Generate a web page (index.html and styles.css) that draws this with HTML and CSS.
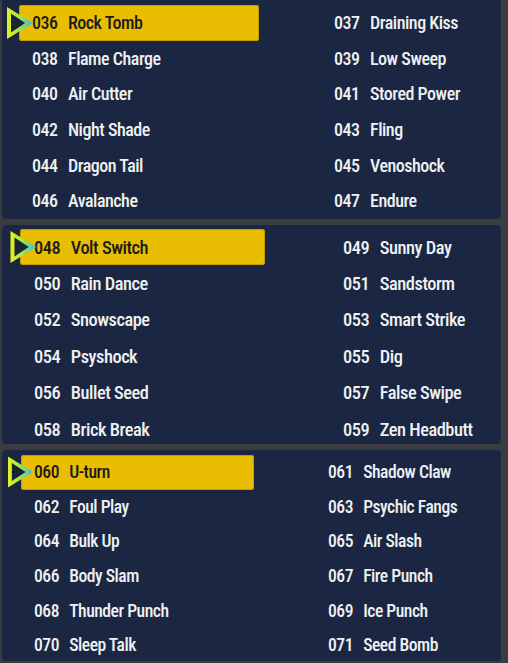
FILE: index.html
```html
<!DOCTYPE html>
<html lang="en">
<head>
<meta charset="utf-8">
<title>TM List</title>
<link rel="stylesheet" href="styles.css">
</head>
<body>
<main class="list">
  <section class="panel panel-a">
    <div class="item sel"><svg class="cursor" viewBox="0 0 26 32" width="26" height="32"><defs><linearGradient id="ga" x1="0" y1="0" x2="1" y2="0"><stop offset="0" stop-color="#e4f21c"/><stop offset="0.45" stop-color="#a6e44a"/><stop offset="1" stop-color="#2cc0f0"/></linearGradient></defs><polygon points="0,0 26,16 0,32" fill="url(#ga)"/><polygon points="4,6.6 18.2,16 4,25.4" fill="#1a2434"/></svg><span class="num">036</span><span class="name">Rock Tomb</span></div>
    <div class="item"><span class="num">037</span><span class="name">Draining Kiss</span></div>
    <div class="item"><span class="num">038</span><span class="name">Flame Charge</span></div>
    <div class="item"><span class="num">039</span><span class="name">Low Sweep</span></div>
    <div class="item"><span class="num">040</span><span class="name">Air Cutter</span></div>
    <div class="item"><span class="num">041</span><span class="name">Stored Power</span></div>
    <div class="item"><span class="num">042</span><span class="name">Night Shade</span></div>
    <div class="item"><span class="num">043</span><span class="name">Fling</span></div>
    <div class="item"><span class="num">044</span><span class="name">Dragon Tail</span></div>
    <div class="item"><span class="num">045</span><span class="name">Venoshock</span></div>
    <div class="item"><span class="num">046</span><span class="name">Avalanche</span></div>
    <div class="item"><span class="num">047</span><span class="name">Endure</span></div>
  </section>
  <section class="panel panel-b">
    <div class="item sel"><svg class="cursor" viewBox="0 0 26 32" width="27" height="32"><defs><linearGradient id="gb" x1="0" y1="0" x2="1" y2="0"><stop offset="0" stop-color="#e4f21c"/><stop offset="0.45" stop-color="#a6e44a"/><stop offset="1" stop-color="#2cc0f0"/></linearGradient></defs><polygon points="0,0 26,16 0,32" fill="url(#gb)"/><polygon points="4,6.6 18.2,16 4,25.4" fill="#1a2434"/></svg><span class="num">048</span><span class="name">Volt Switch</span></div>
    <div class="item"><span class="num">049</span><span class="name">Sunny Day</span></div>
    <div class="item"><span class="num">050</span><span class="name">Rain Dance</span></div>
    <div class="item"><span class="num">051</span><span class="name">Sandstorm</span></div>
    <div class="item"><span class="num">052</span><span class="name">Snowscape</span></div>
    <div class="item"><span class="num">053</span><span class="name">Smart Strike</span></div>
    <div class="item"><span class="num">054</span><span class="name">Psyshock</span></div>
    <div class="item"><span class="num">055</span><span class="name">Dig</span></div>
    <div class="item"><span class="num">056</span><span class="name">Bullet Seed</span></div>
    <div class="item"><span class="num">057</span><span class="name">False Swipe</span></div>
    <div class="item"><span class="num">058</span><span class="name">Brick Break</span></div>
    <div class="item"><span class="num">059</span><span class="name">Zen Headbutt</span></div>
  </section>
  <section class="panel panel-c">
    <div class="item sel"><svg class="cursor" viewBox="0 0 26 32" width="25" height="31"><defs><linearGradient id="gc" x1="0" y1="0" x2="1" y2="0"><stop offset="0" stop-color="#e4f21c"/><stop offset="0.45" stop-color="#a6e44a"/><stop offset="1" stop-color="#2cc0f0"/></linearGradient></defs><polygon points="0,0 26,16 0,32" fill="url(#gc)"/><polygon points="4,6.6 18.2,16 4,25.4" fill="#1a2434"/></svg><span class="num">060</span><span class="name">U-turn</span></div>
    <div class="item"><span class="num">061</span><span class="name">Shadow Claw</span></div>
    <div class="item"><span class="num">062</span><span class="name">Foul Play</span></div>
    <div class="item"><span class="num">063</span><span class="name">Psychic Fangs</span></div>
    <div class="item"><span class="num">064</span><span class="name">Bulk Up</span></div>
    <div class="item"><span class="num">065</span><span class="name">Air Slash</span></div>
    <div class="item"><span class="num">066</span><span class="name">Body Slam</span></div>
    <div class="item"><span class="num">067</span><span class="name">Fire Punch</span></div>
    <div class="item"><span class="num">068</span><span class="name">Thunder Punch</span></div>
    <div class="item"><span class="num">069</span><span class="name">Ice Punch</span></div>
    <div class="item"><span class="num">070</span><span class="name">Sleep Talk</span></div>
    <div class="item"><span class="num">071</span><span class="name">Seed Bomb</span></div>
  </section>
</main>
</body>
</html>
```
FILE: styles.css
```css
html, body {
  margin: 0;
  padding: 0;
  background: #3b3c41;
}
body {
  width: 508px;
  height: 663px;
  overflow: hidden;
  font-family: "Roboto", "Open Sans", sans-serif;
  font-stretch: condensed;
  font-weight: 500;
  letter-spacing: -0.03em;
  color: #eff1f3;
}
.list {
  display: flex;
  flex-direction: column;
  gap: 6px;
  padding: 0 7px 0 2px;
}
.panel {
  background: #1b2742;
  border-radius: 4px;
  display: grid;
  grid-template-columns: var(--hl) 1fr;
  grid-auto-rows: var(--row);
  column-gap: var(--gap);
  padding-left: var(--pl);
  padding-top: var(--pt);
  font-size: var(--fs);
  box-sizing: border-box;
  height: var(--h);
  overflow: hidden;
}
.panel-a {
  --hl: 240px; --gap: 75px; --pl: 17px; --pt: 9px; --row: 35.6px; --fs: 18px; --ind: 13px; --h: 223px;
  margin-top: -4px;
}
.panel-b {
  --hl: 245px; --gap: 78px; --pl: 18px; --pt: 4px; --row: 36.4px; --fs: 18.4px; --ind: 14px; --h: 219px;
}
.panel-c {
  --hl: 233px; --gap: 74px; --pl: 19px; --pt: 5px; --row: 34.6px; --fs: 17.6px; --ind: 13px; --h: 211px;
}
.item {
  display: flex;
  align-items: center;
  gap: 0.58em;
  white-space: nowrap;
  position: relative;
}
.panel > .item:nth-child(odd) {
  padding-left: var(--ind);
}
.item.sel {
  background: #e9bd02;
  border-radius: 3px;
  box-shadow: inset 0 0 0 1px #c49c00;
  color: #1b1b1b;
}
.cursor {
  position: absolute;
  left: -12px;
  top: 50%;
  transform: translateY(-50%);
}
.panel-b .cursor { left: -10px; }
.panel-c .cursor { left: -13px; }
```
